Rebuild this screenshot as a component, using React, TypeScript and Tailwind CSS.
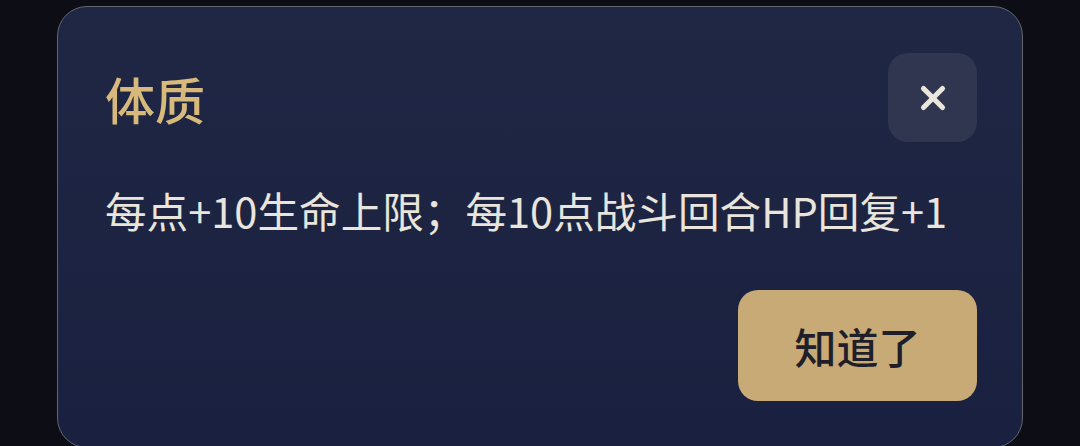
import { X } from 'lucide-react';

export default function App() {
  return (
    <div
      className="h-[446px] w-[1080px] overflow-hidden bg-[#0c0d15] pt-[6px] pl-[57px]"
      style={{ fontFamily: '"Noto Sans CJK SC", "Noto Sans", sans-serif' }}
    >
      <div className="w-[966px] rounded-[30px] border-[1.5px] border-[#63666f] bg-gradient-to-b from-[#1f2745] to-[#1a2140] pl-[47px] pr-[45px] pt-[46px] pb-[46px]">
        {/* header */}
        <div className="flex items-center justify-between">
          <h2 className="text-[50px] font-medium leading-none text-[#d8b97c]">体质</h2>
          <button className="flex h-[89px] w-[89px] items-center justify-center rounded-[20px] bg-[#30364f] text-[#ebe6dc]">
            <X size={38} strokeWidth={3.2} />
          </button>
        </div>

        <p className="mt-[37px] text-[41.6px] leading-[62px] text-[#e9e5dd]">
          每点+10生命上限；每10点战斗回合HP回复+1
        </p>

        <div className="mt-[49px] flex justify-end">
          <button className="h-[111px] w-[239px] rounded-[20px] bg-[#c8aa76] text-[42px] font-medium text-[#1e1f28]">
            知道了
          </button>
        </div>
      </div>
    </div>
  );
}
